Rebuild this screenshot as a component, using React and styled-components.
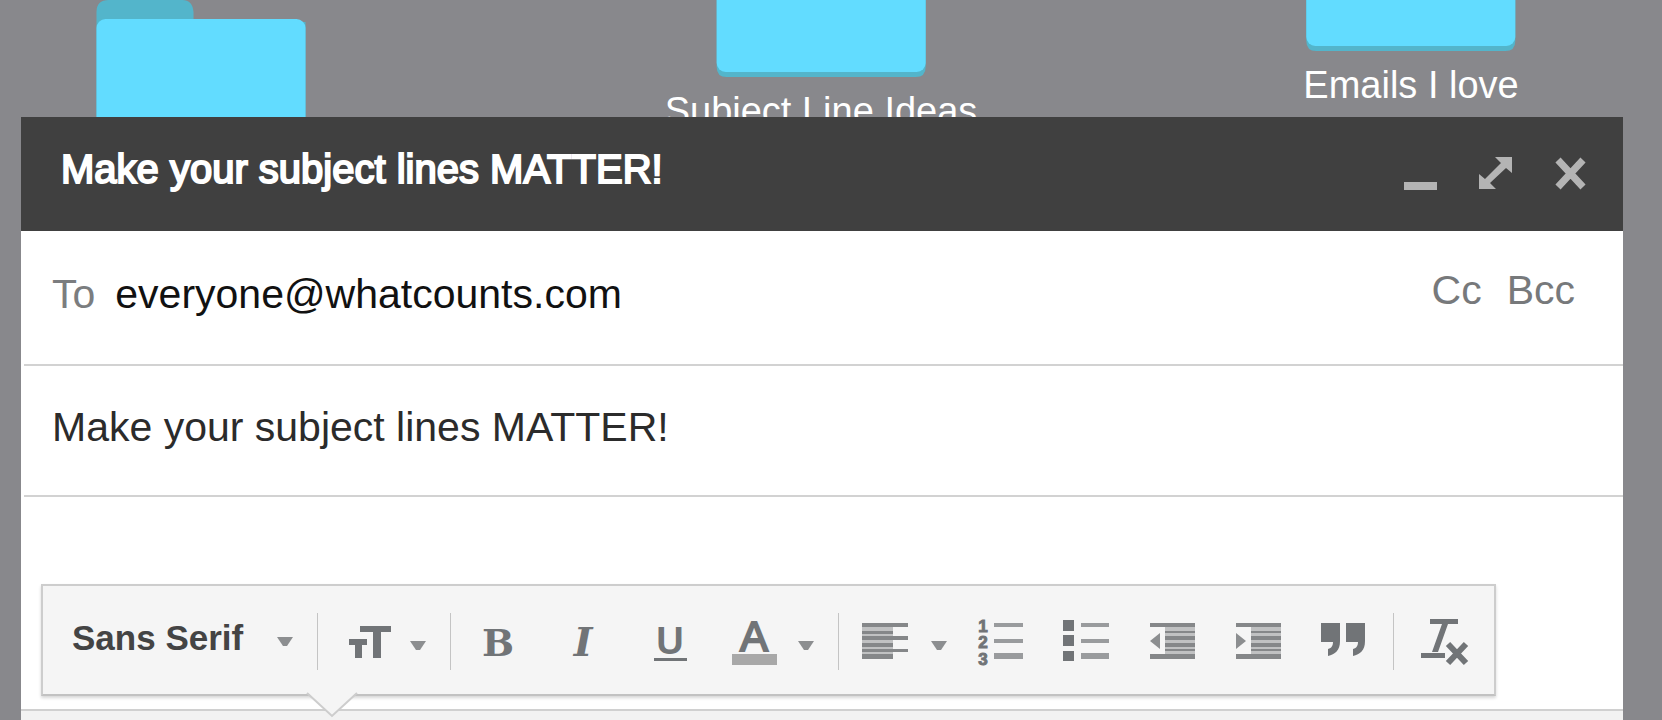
import { useState } from "react";
import styled, { createGlobalStyle } from "styled-components";

const SANS = `"Liberation Sans", Arial, sans-serif`;
const SLAB = `"DejaVu Serif", serif`;

const GlobalStyle = createGlobalStyle`
  * {
    box-sizing: border-box;
  }
  body {
    margin: 0;
    background: #88888c;
    font-family: ${SANS};
  }
  button,
  input,
  select,
  textarea {
    margin: 0;
    padding: 0;
    border: 0;
    outline: 0;
    background: none;
    color: inherit;
    font: inherit;
  }
  svg {
    display: block;
    flex: none;
    overflow: visible;
  }
`;

const Desktop = styled.div`
  position: relative;
  display: flex;
  flex-direction: column;
  min-height: 100vh;
  padding: 117px 39px 0 21px;
  overflow: hidden;
`;

const FolderBox = styled.div`
  position: absolute;
  top: ${(props) => props.$top}px;
  left: ${(props) => props.$center};
  display: flex;
  flex-direction: column;
  align-items: center;
  gap: 12px;
  transform: translateX(-50%);
`;

const FolderName = styled.span`
  color: #fff;
  font-size: 38px;
  line-height: 44px;
  white-space: nowrap;
`;

const ComposeWindow = styled.main`
  position: relative;
  display: flex;
  flex: 1;
  flex-direction: column;
  background: #fff;
`;

const Header = styled.header`
  display: flex;
  align-items: center;
  justify-content: space-between;
  height: 114px;
  padding: 0 34px 0 40px;
  background: #404040;
`;

const Title = styled.h1`
  margin: 0;
  padding-bottom: 10px;
  color: #fff;
  font-size: 40px;
  font-weight: normal;
  line-height: 44px;
  -webkit-text-stroke: 2px #fff;
`;

const WindowButtons = styled.div`
  display: flex;
  gap: 39px;
  color: #b4b4b4;
`;

const IconButton = styled.button`
  display: flex;
  align-items: center;
  gap: 20px;
  cursor: pointer;
`;

const Field = styled.div`
  display: flex;
  align-items: center;
  gap: 20px;
  height: ${(props) => props.$height}px;
  margin-left: 3px;
  padding: 0 48px 8px 28px;
  border-bottom: 2px solid #d2d2d2;
  font-size: 41px;
  line-height: 48px;
`;

const FieldLabel = styled.label`
  color: #7b7d7f;
`;

const TextInput = styled.input`
  flex: 1;
  min-width: 0;
  color: ${(props) => props.$color};
`;

const CopyButtons = styled.div`
  display: flex;
  gap: 25px;
  padding-bottom: 8px;
  color: #77797b;
`;

const CopyButton = styled.button`
  cursor: pointer;
`;

const Message = styled.textarea`
  height: 87px;
  resize: none;
`;

const ToolbarArea = styled.div`
  position: relative;
  z-index: 1;
  display: flex;
  margin: 0 20px 13px;
`;

const Toolbar = styled.div`
  position: relative;
  display: flex;
  padding: 27px 4px 24px 5px;
  border: 2px solid #cdcdcd;
  border-bottom-color: #c2c2c2;
  background: #f5f5f5;
  box-shadow: 0 2px 3px rgba(0, 0, 0, 0.16);
  color: #717477;
`;

const Group = styled.div`
  display: flex;
  align-items: center;
  gap: ${(props) => props.$gap || 37}px;
  height: 57px;
  padding: 0 24px;
  border-left: 1px solid #c4c4c4;
`;

const FontGroup = styled(Group)`
  gap: 0;
  border-left: 0;
`;

const ListGroup = styled(Group)`
  padding-left: 6px;
  border-left: 0;
`;

const FontPicker = styled.label`
  display: flex;
  align-items: center;
  justify-content: space-between;
  width: 221px;
  padding-bottom: 8px;
`;

const FontSelect = styled.select`
  width: 190px;
  appearance: none;
  color: #444;
  font-size: 35px;
  font-weight: bold;
  line-height: 40px;
`;

const Pointer = styled.svg`
  position: absolute;
  bottom: -23px;
  left: 264px;
`;

const Footer = styled.footer`
  flex: 1;
  min-height: 11px;
  border-top: 2px solid #d0d0d0;
  background: #f2f2f2;
`;

const Glyph = styled.text`
  fill: currentColor;
  stroke: currentColor;
  stroke-width: ${(props) => props.$stroke || 0}px;
  font-family: ${(props) => props.$family || SANS};
  font-size: ${(props) => props.$size}px;
  font-weight: ${(props) => props.$weight || "bold"};
  font-style: ${(props) => (props.$italic ? "italic" : "normal")};
  text-anchor: middle;
`;

function Folder({ top, center, name }) {
  return (
    <FolderBox $top={top} $center={center}>
      <svg width="209" height="170" viewBox="0 0 209 170" aria-hidden="true">
        <path
          fill="#53b5cb"
          d="M0 12Q0 0 12 0H86Q96 0 97 12V22H209V160Q209 170 199 170H10Q0 170 0 160Z"
        />
        <rect y="19" width="209" height="146" rx="9" fill="#62dcff" />
      </svg>
      {name && <FolderName>{name}</FolderName>}
    </FolderBox>
  );
}

function Icon({ size = 48, children }) {
  return (
    <svg
      width={size}
      height={size}
      viewBox={`0 0 ${size} ${size}`}
      fill="currentColor"
      aria-hidden="true"
    >
      {children}
    </svg>
  );
}

function Caret() {
  return (
    <svg width="16" height="48" viewBox="0 0 16 48" aria-hidden="true">
      <path d="M0 23H16L10 32H6Z" fill="#8c8e90" />
    </svg>
  );
}

// Right-hand text block shared by the two indent icons
function IndentLines() {
  return (
    <>
      <rect x="16" y="5" width="30" height="35" fill="#c0c1c2" />
      <path
        fill="#858789"
        d="M1 5H46V9H1ZM16 13H46V15H16ZM16 18H46V22H16ZM16 25H46V29H16ZM16 31H46V33H16ZM1 36H46V41H1Z"
      />
    </>
  );
}

function App() {
  const [to, setTo] = useState("everyone@whatcounts.com");
  const [subject, setSubject] = useState("Make your subject lines MATTER!");

  return (
    <>
      <GlobalStyle />
      <Desktop>
        <Folder top={0} center="12.1%" />
        <Folder top={-93} center="49.4%" name="Subject Line Ideas" />
        <Folder top={-119} center="84.9%" name="Emails I love" />

        <ComposeWindow>
          <Header>
            <Title>Make your subject lines MATTER!</Title>
            <WindowButtons>
              <IconButton aria-label="Minimize">
                <Icon size={36}>
                  <rect x="1" y="26" width="33" height="8" />
                </Icon>
              </IconButton>
              <IconButton aria-label="Full screen">
                <Icon size={36}>
                  <path d="M17 1H34V17L28 12L12 27L18 33H1V18L7 23L23 7Z" />
                </Icon>
              </IconButton>
              <IconButton aria-label="Close">
                <Icon size={36}>
                  <path
                    d="M5 4L30 31M30 4L5 31"
                    stroke="currentColor"
                    strokeWidth="7"
                  />
                </Icon>
              </IconButton>
            </WindowButtons>
          </Header>

          <Field $height={135}>
            <FieldLabel htmlFor="to">To</FieldLabel>
            <TextInput
              id="to"
              $color="#111"
              value={to}
              onChange={(e) => setTo(e.target.value)}
            />
            <CopyButtons>
              <CopyButton>Cc</CopyButton>
              <CopyButton>Bcc</CopyButton>
            </CopyButtons>
          </Field>
          <Field $height={131}>
            <TextInput
              aria-label="Subject"
              $color="#2b2b2b"
              value={subject}
              onChange={(e) => setSubject(e.target.value)}
            />
          </Field>
          <Message aria-label="Message body" />

          <ToolbarArea>
            <Toolbar role="toolbar" aria-label="Formatting">
              <FontGroup>
                <FontPicker>
                  <FontSelect aria-label="Font">
                    <option>Sans Serif</option>
                  </FontSelect>
                  <Caret />
                </FontPicker>
              </FontGroup>
              <Group>
                <IconButton aria-label="Size">
                  <Icon>
                    <path d="M18 8H49V14H39V40H31V14H18ZM7 21H25V27H20V40H13V27H7Z" />
                  </Icon>
                  <Caret />
                </IconButton>
              </Group>
              <Group>
                <IconButton aria-label="Bold">
                  <Icon>
                    <Glyph x="23" y="38" $size={38} $family={SLAB}>
                      B
                    </Glyph>
                  </Icon>
                </IconButton>
                <IconButton aria-label="Italic">
                  <Icon>
                    <Glyph x="23" y="38" $size={40} $family={SLAB} $italic>
                      I
                    </Glyph>
                  </Icon>
                </IconButton>
                <IconButton aria-label="Underline">
                  <Icon>
                    <Glyph x="25" y="36" $size={38}>
                      U
                    </Glyph>
                    <rect x="9" y="40" width="33" height="3" />
                  </Icon>
                </IconButton>
                <IconButton aria-label="Text color">
                  <Icon>
                    <Glyph
                      x="24"
                      y="33"
                      $size={42}
                      $weight="normal"
                      $stroke={2}
                    >
                      A
                    </Glyph>
                    <rect x="2" y="36" width="45" height="11" fill="#a8a8a8" />
                  </Icon>
                  <Caret />
                </IconButton>
              </Group>
              <Group>
                <IconButton aria-label="Align">
                  <Icon>
                    <rect x="-1" y="5" width="31" height="35" fill="#c0c1c2" />
                    <path
                      fill="#858789"
                      d="M-1 5H45V9H-1ZM-1 13H30V16H-1ZM-1 18H45V22H-1ZM-1 25H30V29H-1ZM-1 31H45V34H-1ZM-1 36H30V41H-1Z"
                    />
                  </Icon>
                  <Caret />
                </IconButton>
              </Group>
              <ListGroup $gap={38}>
                <IconButton aria-label="Numbered list">
                  <Icon>
                    <Glyph x="6" y="14" $size={17} $stroke={1}>
                      1
                    </Glyph>
                    <Glyph x="6" y="30" $size={17} $stroke={1}>
                      2
                    </Glyph>
                    <Glyph x="6" y="47" $size={17} $stroke={1}>
                      3
                    </Glyph>
                    <path
                      fill="#999b9d"
                      d="M17 5H46V9H17ZM17 21H46V25H17ZM17 35H46V41H17Z"
                    />
                  </Icon>
                </IconButton>
                <IconButton aria-label="Bulleted list">
                  <Icon>
                    <path d="M0 2H11V13H0ZM0 17H11V28H0ZM0 33H11V43H0Z" />
                    <path
                      fill="#999b9d"
                      d="M18 5H46V9H18ZM18 21H46V25H18ZM18 35H46V41H18Z"
                    />
                  </Icon>
                </IconButton>
                <IconButton aria-label="Indent less">
                  <Icon>
                    <IndentLines />
                    <path d="M11 15V31L1 23Z" fill="#8c8e90" />
                  </Icon>
                </IconButton>
                <IconButton aria-label="Indent more">
                  <Icon>
                    <IndentLines />
                    <path d="M1 15V31L11 23Z" fill="#8c8e90" />
                  </Icon>
                </IconButton>
                <IconButton aria-label="Quote">
                  <Icon>
                    <path d="M0 5H19V23C19 33 14 36 7 38V31C11 30 12 27 12 24H0ZM25 5H44V23C44 33 39 36 32 38V31C36 30 37 27 37 24H25Z" />
                  </Icon>
                </IconButton>
              </ListGroup>
              <Group>
                <IconButton aria-label="Remove formatting">
                  <Icon>
                    <path d="M12 1H40V6H30L20 34H14L24 6H12ZM3 35H27V40H3Z" />
                    <path
                      d="M30 26L48 45M48 26L30 45"
                      stroke="currentColor"
                      strokeWidth="6"
                    />
                  </Icon>
                </IconButton>
              </Group>
              <Pointer width="50" height="25" viewBox="0 0 50 25">
                <path d="M0 0H50L25 24Z" fill="#f5f5f5" />
                <path
                  d="M0 1L25 24L50 1"
                  fill="none"
                  stroke="#cdcdcd"
                  strokeWidth="2"
                />
              </Pointer>
            </Toolbar>
          </ToolbarArea>
          <Footer />
        </ComposeWindow>
      </Desktop>
    </>
  );
}

export default App;
